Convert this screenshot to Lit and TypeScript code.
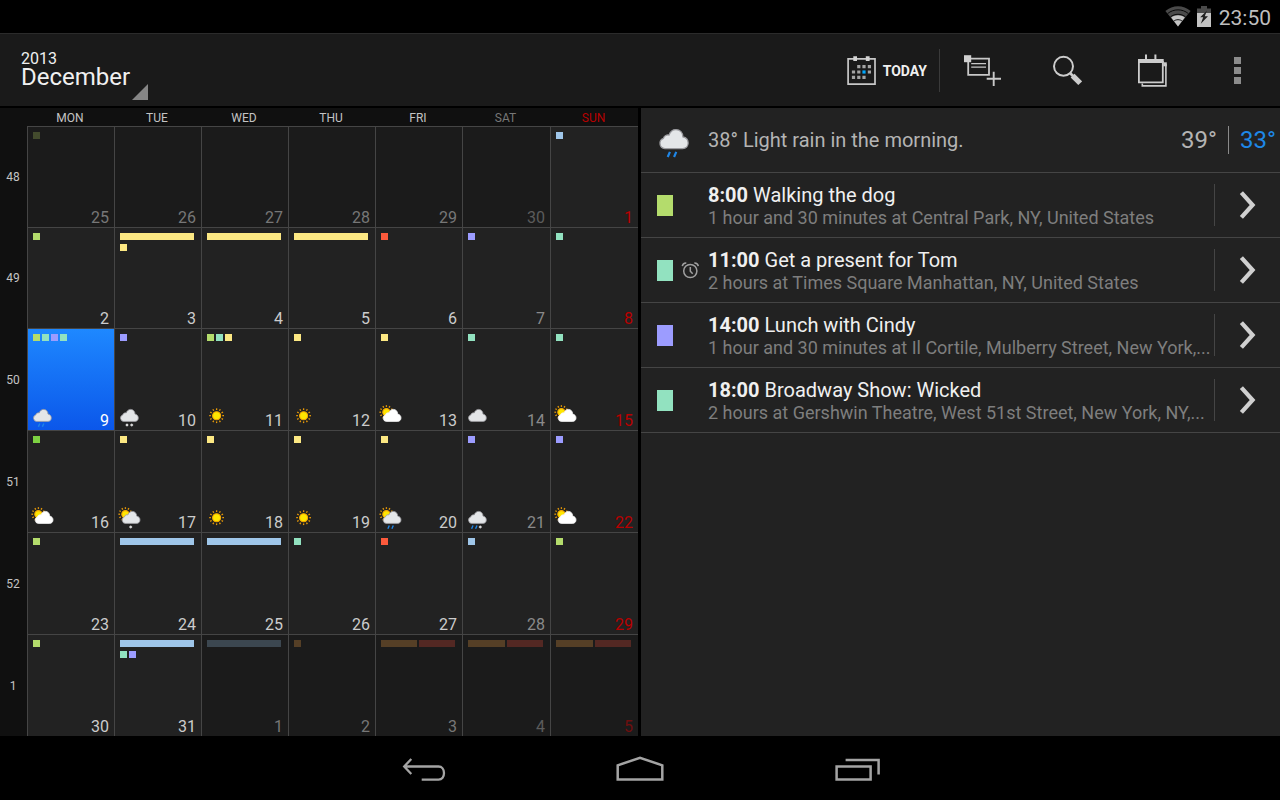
import { LitElement, html, svg, css, nothing } from "lit";
import { customElement, property, state } from "lit/decorators.js";
import { classMap } from "lit/directives/class-map.js";

type Weather = "cloud" | "rain" | "snow" | "sun" | "partly" | "partly-rain" | "partly-snow" | "sleet";

interface Day {
  n: number;
  out?: boolean;
  marks?: string[][];
  weather?: Weather;
}

/* Mark colours; a name ending in "-bar" spans the free width of the cell. */
const COLORS: Record<string, string> = {
  lime: "#b4dc6c",
  olive: "#434b2d",
  green: "#7dd142",
  yellow: "#fce883",
  red: "#fc5a3c",
  violet: "#9c9cff",
  mint: "#92e2c0",
  sky: "#9fc6e9",
  slate: "#3c4750",
  brown: "#553f26",
  maroon: "#532823",
};

const WEEKS: { week: number; days: Day[] }[] = [
  {
    week: 48,
    days: [
      { n: 25, out: true, marks: [["olive"]] },
      { n: 26, out: true },
      { n: 27, out: true },
      { n: 28, out: true },
      { n: 29, out: true },
      { n: 30, out: true },
      { n: 1, marks: [["sky"]] },
    ],
  },
  {
    week: 49,
    days: [
      { n: 2, marks: [["lime"]] },
      { n: 3, marks: [["yellow-bar"], ["yellow"]] },
      { n: 4, marks: [["yellow-bar"]] },
      { n: 5, marks: [["yellow-bar"]] },
      { n: 6, marks: [["red"]] },
      { n: 7, marks: [["violet"]] },
      { n: 8, marks: [["mint"]] },
    ],
  },
  {
    week: 50,
    days: [
      { n: 9, marks: [["lime", "mint", "violet", "mint"]], weather: "rain" },
      { n: 10, marks: [["violet"]], weather: "snow" },
      { n: 11, marks: [["lime", "mint", "yellow"]], weather: "sun" },
      { n: 12, marks: [["yellow"]], weather: "sun" },
      { n: 13, marks: [["yellow"]], weather: "partly" },
      { n: 14, marks: [["mint"]], weather: "cloud" },
      { n: 15, marks: [["mint"]], weather: "partly" },
    ],
  },
  {
    week: 51,
    days: [
      { n: 16, marks: [["green"]], weather: "partly" },
      { n: 17, marks: [["yellow"]], weather: "partly-snow" },
      { n: 18, marks: [["yellow"]], weather: "sun" },
      { n: 19, marks: [["yellow"]], weather: "sun" },
      { n: 20, marks: [["yellow"]], weather: "partly-rain" },
      { n: 21, marks: [["violet"]], weather: "sleet" },
      { n: 22, marks: [["violet"]], weather: "partly" },
    ],
  },
  {
    week: 52,
    days: [
      { n: 23, marks: [["lime"]] },
      { n: 24, marks: [["sky-bar"]] },
      { n: 25, marks: [["sky-bar"]] },
      { n: 26, marks: [["mint"]] },
      { n: 27, marks: [["red"]] },
      { n: 28, marks: [["sky"]] },
      { n: 29, marks: [["lime"]] },
    ],
  },
  {
    week: 1,
    days: [
      { n: 30, marks: [["lime"]] },
      { n: 31, marks: [["sky-bar"], ["mint", "violet"]] },
      { n: 1, out: true, marks: [["slate-bar"]] },
      { n: 2, out: true, marks: [["brown"]] },
      { n: 3, out: true, marks: [["brown-bar", "maroon-bar"]] },
      { n: 4, out: true, marks: [["brown-bar", "maroon-bar"]] },
      { n: 5, out: true, marks: [["brown-bar", "maroon-bar"]] },
    ],
  },
];

const WEEKDAYS = ["MON", "TUE", "WED", "THU", "FRI", "SAT", "SUN"];

const EVENTS = [
  { time: "8:00", title: "Walking the dog", detail: "1 hour and 30 minutes at Central Park, NY, United States", color: "lime" },
  { time: "11:00", title: "Get a present for Tom", detail: "2 hours at Times Square Manhattan, NY, United States", color: "mint", alarm: true },
  { time: "14:00", title: "Lunch with Cindy", detail: "1 hour and 30 minutes at Il Cortile, Mulberry Street, New York,...", color: "violet" },
  { time: "18:00", title: "Broadway Show: Wicked", detail: "2 hours at Gershwin Theatre, West 51st Street, New York, NY,...", color: "mint" },
];

@customElement("weather-icon")
class WeatherIcon extends LitElement {
  static styles = css`
    :host { display: block; flex: none; width: 24px; height: 24px; }
    svg { display: block; width: 100%; height: 100%; overflow: visible; }
  `;
  @property() kind: Weather = "cloud";

  private sun(cx: number, cy: number, r: number) {
    return svg`<g transform="translate(${cx} ${cy})">
      ${Array.from({ length: 12 }, (_, i) => svg`<path d="M0 ${-r - 1.7}V${-r - 3.4}" transform="rotate(${i * 30})" stroke="#e89a08" stroke-width="1.3"/>`)}
      <circle r=${r} fill="#ffe600" stroke="#f5a800" stroke-width="1.1"/>
    </g>`;
  }

  private cloud(dx: number, white: boolean) {
    return svg`<path transform="translate(${dx} 0)"
      d="M5.6 17.4A3.3 3.3 0 0 1 4.7 11C5.2 9.2 6.9 8.5 8.2 8.9C9 6.6 10.6 5.4 12.6 5.4C15.2 5.4 17 7.4 17 10.1C19 10.5 20.3 12 20.3 13.9C20.3 15.9 18.9 17.4 16.9 17.4Z"
      fill=${white ? "#ffffff" : "#e4e6e8"} stroke=${white ? "#f4f4f4" : "#9b9b9f"} stroke-width="0.8"/>`;
  }

  render() {
    const k = this.kind;
    const partly = k.startsWith("partly");
    const drops = (x: number) => svg`<path d="M${x + 2} 19.5L${x + 0.6} 22.7M${x + 6} 19.5L${x + 4.6} 22.7" stroke="#1f86e6" stroke-width="1.4"/>`;
    const flake = (x: number) => svg`<path d="M${x - 1.5} 21H${x + 1.5}M${x} 19.5V22.5M${x - 1} 20L${x + 1} 22M${x + 1} 20L${x - 1} 22" stroke="#dddddd" stroke-width="0.9"/>`;
    return html`<svg viewBox="0 0 24 24" aria-hidden="true">
      ${k === "sun" ? this.sun(11.6, 11.7, 4) : nothing}
      ${partly ? this.sun(7.4, 8.2, 3.6) : nothing}
      ${k === "sun" ? nothing : this.cloud(partly ? 1.7 : 0, k === "partly")}
      ${k === "rain" ? drops(6.8) : nothing}
      ${k === "partly-rain" ? drops(8.3) : nothing}
      ${k === "sleet" ? svg`${drops(5)}${flake(14.3)}` : nothing}
      ${k === "snow" ? svg`${flake(9)}${flake(13.7)}` : nothing}
      ${k === "partly-snow" ? flake(12.7) : nothing}
    </svg>`;
  }
}

@customElement("month-grid")
class MonthGrid extends LitElement {
  static styles = css`
    :host { display: flex; min-width: 0; background: #101010; }
    table { flex: 1; display: flex; flex-direction: column; min-width: 0; }
    thead { display: block; }
    tbody {
      flex: 1;
      display: grid;
      min-height: 0;
      grid-template-rows: repeat(6, minmax(0, 1fr));
      grid-template-rows: repeat(2, round(down, 100% / 6, 1px)) repeat(4, minmax(0, 1fr));
    }
    tr {
      display: grid;
      min-height: 0;
      grid-template-columns: 27px repeat(7, minmax(0, 1fr));
      grid-template-columns: 27px repeat(5, round(down, (100% - 27px) / 7, 1px)) repeat(2, minmax(0, 1fr));
    }
    th, td { display: grid; padding: 0; min-width: 0; min-height: 0; }
    th { box-sizing: border-box; padding: 1px 1px 0 0; font-size: 12px; font-weight: 400; color: #c4c4c4; place-items: center; }
    thead th { height: 18px; line-height: 18px; }
    .corner { visibility: hidden; }
    .sat { color: #777777; }
    .sun { color: #b80000; }
    td { border-top: 1px solid #454545; border-left: 1px solid #454545; background: #222222; }
    td.out { background: #1b1b1b; }
    td.selected { background: linear-gradient(#1e88ff, #0b57ea); }
    .day {
      display: flex;
      flex-direction: column;
      justify-content: space-between;
      min-width: 0;
      padding: 5px 5px 0 5px;
      border: 0;
      background: none;
      font: inherit;
      font-size: 16px;
      color: #cccccc;
      text-align: left;
      cursor: pointer;
    }
    .day.sat { color: #8a8a8a; }
    .day.sun { color: #b80000; }
    .out .day { color: #777777; }
    .out .day.sat { color: #5c5c5c; }
    .out .day.sun { color: #6e0f0f; }
    .selected .day { color: #ffffff; }
    .marks { display: flex; flex-direction: column; gap: 4px; padding-right: 2px; }
    .line { display: flex; gap: 2px; }
    .mark { width: 7px; height: 7px; }
    .mark.bar { flex: 1; }
    .foot { display: flex; align-items: flex-end; justify-content: space-between; height: 26px; }
    .foot weather-icon { margin: 0 0 2px -2px; }
    .number { margin-left: auto; line-height: 18px; }
  `;
  @state() private selected = "50-9";

  private kindOf(i: number) {
    return { sat: i === 5, sun: i === 6 };
  }

  render() {
    return html`<table aria-label="December 2013">
      <thead>
        <tr>
          <th class="corner" scope="col">Wk</th>
          ${WEEKDAYS.map((d, i) => html`<th scope="col" class=${classMap(this.kindOf(i))}>${d}</th>`)}
        </tr>
      </thead>
      <tbody>
        ${WEEKS.map(({ week, days }) => html`<tr>
          <th scope="row">${week}</th>
          ${days.map((d, i) => {
            const id = `${week}-${d.n}`;
            return html`<td class=${classMap({ out: !!d.out, selected: this.selected === id })}>
              <button class=${classMap({ day: true, ...this.kindOf(i) })} @click=${() => (this.selected = id)}>
                <span class="marks">
                  ${(d.marks ?? []).map((line) => html`<span class="line">
                    ${line.map((m) => html`<span class=${classMap({ mark: true, bar: m.endsWith("-bar") })}
                      style="background:${COLORS[m.replace("-bar", "")]}"></span>`)}
                  </span>`)}
                </span>
                <span class="foot">
                  ${d.weather ? html`<weather-icon .kind=${d.weather}></weather-icon>` : nothing}
                  <span class="number">${d.n}</span>
                </span>
              </button>
            </td>`;
          })}
        </tr>`)}
      </tbody>
    </table>`;
  }
}

@customElement("day-agenda")
class DayAgenda extends LitElement {
  static styles = css`
    :host { display: block; min-width: 0; background: #222222; }
    .row {
      display: flex;
      align-items: center;
      box-sizing: border-box;
      height: 65px;
      border-bottom: 1px solid #454545;
    }
    .forecast { color: #b4b4b4; font-size: 20px; }
    .lead { flex: none; display: flex; align-items: center; justify-content: space-between; box-sizing: border-box; width: 67px; padding: 0 9px 0 16px; }
    .lead weather-icon { width: 38px; height: 38px; margin-left: -1px; }
    .summary { flex: 1; margin: 0; min-width: 0; }
    .temp { font-size: 24px; line-height: 28px; }
    .low { margin-left: 11px; padding: 0 4px 0 11px; border-left: 1px solid #8a8a8a; color: #1e88e8; }
    ul { list-style: none; margin: 0; padding: 0; }
    .event { padding-top: 1px; }
    .swatch { width: 16px; height: 21px; }
    .alarm { width: 18px; height: 18px; }
    .text { flex: 1; min-width: 0; }
    .title, .detail { margin: 0; overflow: hidden; white-space: nowrap; text-overflow: ellipsis; }
    .title { font-size: 20px; line-height: 23px; color: #f0f0f0; }
    .detail { font-size: 18px; line-height: 21px; color: #7e7e7e; }
    .open {
      display: grid;
      place-items: center;
      box-sizing: border-box;
      width: 66px;
      height: 42px;
      margin-bottom: 2px;
      padding: 0;
      border: 0;
      border-left: 1px solid #454545;
      background: none;
      cursor: pointer;
    }
    .open svg { width: 19px; height: 30px; }
  `;

  render() {
    return html`
      <div class="row forecast">
        <span class="lead"><weather-icon kind="rain"></weather-icon></span>
        <p class="summary">38° Light rain in the morning.</p>
        <span class="temp">39°</span>
        <span class="temp low">33°</span>
      </div>
      <ul>
        ${EVENTS.map((e) => html`<li class="row event">
          <span class="lead">
            <span class="swatch" style="background:${COLORS[e.color]}"></span>
            ${e.alarm
              ? html`<svg class="alarm" viewBox="0 0 18 18" fill="none" stroke="#a0a0a0" stroke-width="1.5" aria-label="Reminder">
                  <circle cx="9.3" cy="9" r="6.6"/>
                  <path d="M9.3 5V9.2L11.7 11.8M1.3 4.2C1.6 2.2 3.3 0.9 5.3 1M17.3 4.2C17 2.2 15.3 0.9 13.3 1"/>
                </svg>`
              : nothing}
          </span>
          <div class="text">
            <p class="title"><b>${e.time}</b> ${e.title}</p>
            <p class="detail">${e.detail}</p>
          </div>
          <button class="open" aria-label="Open ${e.title}">
            <svg viewBox="0 0 19 30" fill="none" stroke="#d0d0d0" stroke-width="4.2"><path d="M3.4 2.6L14.6 15L3.4 27.4"/></svg>
          </button>
        </li>`)}
      </ul>`;
  }
}

@customElement("app-root")
class AppRoot extends LitElement {
  static styles = css`
    :host {
      display: flex;
      flex-direction: column;
      height: 100vh;
      background: #000000;
      color: #f0f0f0;
      font-family: Roboto, "Liberation Sans", sans-serif;
    }
    button { padding: 0; border: 0; background: none; color: inherit; font: inherit; cursor: pointer; }
    svg { display: block; }
    .status { flex: none; display: flex; align-items: center; justify-content: flex-end; height: 33px; padding-right: 9px; color: #bebebe; font-size: 21px; line-height: 24px; }
    .status .clock { padding-top: 2px; }
    .status .wifi { margin-right: 6px; }
    .status .battery { margin-right: 8px; }
    .bar { flex: none; display: flex; align-items: stretch; box-sizing: border-box; height: 73px; border-top: 1px solid #2b2b2b; background: #1a1a1a; }
    .spinner { display: flex; align-items: flex-end; gap: 2px; margin-right: auto; padding: 0 0 6px 21px; text-align: left; }
    .period { display: grid; padding-bottom: 13px; }
    .year { font-size: 16px; line-height: 16px; }
    .month { font-size: 24px; line-height: 20px; }
    .action { display: grid; place-items: center; width: 85px; padding-top: 2px; }
    .today { display: flex; align-items: center; gap: 7px; padding: 2px 12px 0 11px; }
    .today span { font-size: 14px; font-weight: 700; }
    .rule { width: 1px; height: 43px; align-self: center; background: #3a3a3a; }
    .panes { flex: 1; display: grid; min-height: 0; grid-template-columns: calc(50% - 2px) minmax(0, 1fr); gap: 3px; padding-top: 2px; }
    .nav { flex: none; display: flex; justify-content: center; height: 64px; }
    .nav button { display: grid; place-items: center; width: 216px; padding-top: 2px; }
  `;

  render() {
    return html`
      <div class="status">
        <svg class="wifi" width="26" height="21" viewBox="0 0 26 21" aria-label="Wi-Fi">
          <path d="M0.4 5C7.5 -1.4 18.5 -1.4 25.6 5L13 20.5Z" fill="#4a4a4a"/>
          <path d="M6.2 11.6C10 8.6 16 8.6 19.8 11.6L13 20.5Z" fill="#c4c4c4"/>
          <path d="M2.6 7.6C8.6 2.6 17.4 2.6 23.4 7.6M5.4 10.9C9.8 7.4 16.2 7.4 20.6 10.9M8.6 15.2C11.2 13.2 14.8 13.2 17.4 15.2" fill="none" stroke="#000000" stroke-width="0.9"/>
        </svg>
        <svg class="battery" width="14" height="21" viewBox="0 0 14 21" aria-label="Battery charging">
          <path d="M4 0H10V2.5H14V7H0V2.5H4Z" fill="#4a4a4a"/>
          <path d="M0 7H14V21H0Z" fill="#c4c4c4"/>
          <path d="M10 4.5L3.2 11.2H6.2L3.8 17.8L11 10.2H7.8Z" fill="#202020"/>
        </svg>
        <span class="clock">23:50</span>
      </div>
      <header class="bar">
        <button class="spinner" aria-haspopup="listbox">
          <span class="period"><span class="year">2013</span><span class="month">December</span></span>
          <svg width="16" height="16" viewBox="0 0 16 16" aria-hidden="true"><path d="M16 0V16H0Z" fill="#868686"/></svg>
        </button>
        <button class="today">
          <svg width="29" height="30" viewBox="0 0 29 30" aria-hidden="true">
            <path d="M1.1 2.8H28V28.2H1.1Z" fill="none" stroke="#c8c8c8" stroke-width="1.7"/>
            <path d="M6.3 0.3H10V5H6.3ZM18.8 0.3H22.6V5H18.8Z" fill="#d4d4d4"/>
            <path d="M10.2 9h3.2v3.2h-3.2zM15.4 9h3.2v3.2h-3.2zM20.8 9H24v3.2h-3.2zM4.9 14.4h3.2v3.2H4.9zM10.2 14.4h3.2v3.2h-3.2zM20.8 14.4H24v3.2h-3.2zM4.9 19.7h3.2v3.2H4.9zM10.2 19.7h3.2v3.2h-3.2zM15.4 19.7h3.2v3.2h-3.2z" fill="#a4a4a4"/>
            <path d="M15.4 14.4h3.2v3.2h-3.2z" fill="#00a8ff"/>
          </svg>
          <span>TODAY</span>
        </button>
        <span class="rule"></span>
        <button class="action" aria-label="New event">
          <svg width="37" height="32" viewBox="0 0 37 32" fill="none" stroke="#c8c8c8" aria-hidden="true">
            <path d="M4.2 3.6H25V19.8H4.2Z" stroke-width="1.8"/>
            <path d="M0 0.2H7.2V7.2H0Z" fill="#d0d0d0" stroke="none"/>
            <path d="M7.2 8.7H22M7.2 12.2H22" stroke-width="1.3"/>
            <path d="M29.7 16.8V31M22.7 23.7H37" stroke-width="1.9"/>
          </svg>
        </button>
        <button class="action" aria-label="Search">
          <svg width="29" height="32" viewBox="0 0 29 32" fill="none" stroke="#cccccc" aria-hidden="true">
            <circle cx="10.5" cy="11.3" r="9.5" stroke-width="2"/>
            <path d="M17 18L20.5 21.5" stroke-width="2.6"/>
            <path d="M19.6 20.6L27.2 28.2" stroke-width="5.4"/>
          </svg>
        </button>
        <button class="action" aria-label="Calendars">
          <svg width="29" height="34" viewBox="0 0 29 34" fill="none" stroke="#cccccc" aria-hidden="true">
            <path d="M8 0.6V6M17.4 0.6V6" stroke-width="2"/>
            <path d="M0 5H25.7V9H0Z" fill="#cccccc" stroke="none"/>
            <path d="M0.9 7V28.3H24.8V7" stroke-width="1.8"/>
            <path d="M25.2 8.3H28.8V12.3H25.2Z" fill="#cccccc" stroke="none"/>
            <path d="M27.9 10V31.9H4.3V29.5" stroke-width="1.6"/>
          </svg>
        </button>
        <button class="action" aria-label="More options">
          <svg width="7" height="28" viewBox="0 0 7 28" aria-hidden="true"><path d="M0 0H7V7H0ZM0 10H7V17H0ZM0 20H7V27H0Z" fill="#8c8c8c"/></svg>
        </button>
      </header>
      <main class="panes">
        <month-grid></month-grid>
        <day-agenda></day-agenda>
      </main>
      <nav class="nav">
        <button aria-label="Back">
          <svg width="44" height="26" viewBox="0 0 44 26" fill="none" stroke="#a4a4a4" stroke-width="2.3" aria-hidden="true">
            <path d="M9.3 3L2.2 10.5L9.3 18M2 10.5H36.5C40 10.5 42 13.3 42 17C42 20.7 40 23.6 36.5 23.6H19.7"/>
          </svg>
        </button>
        <button aria-label="Home">
          <svg width="48" height="26" viewBox="0 0 48 26" fill="none" stroke="#a4a4a4" stroke-width="2.5" aria-hidden="true">
            <path d="M1.7 23.5V9.3L24 1.8L46.3 9.3V23.5Z"/>
          </svg>
        </button>
        <button aria-label="Recent apps">
          <svg width="48" height="26" viewBox="0 0 48 26" fill="none" stroke="#a4a4a4" stroke-width="2.5" aria-hidden="true">
            <path d="M4.6 10.5H38.6V23.6H4.6ZM13.6 4H46.6V18.6"/>
          </svg>
        </button>
      </nav>`;
  }
}
